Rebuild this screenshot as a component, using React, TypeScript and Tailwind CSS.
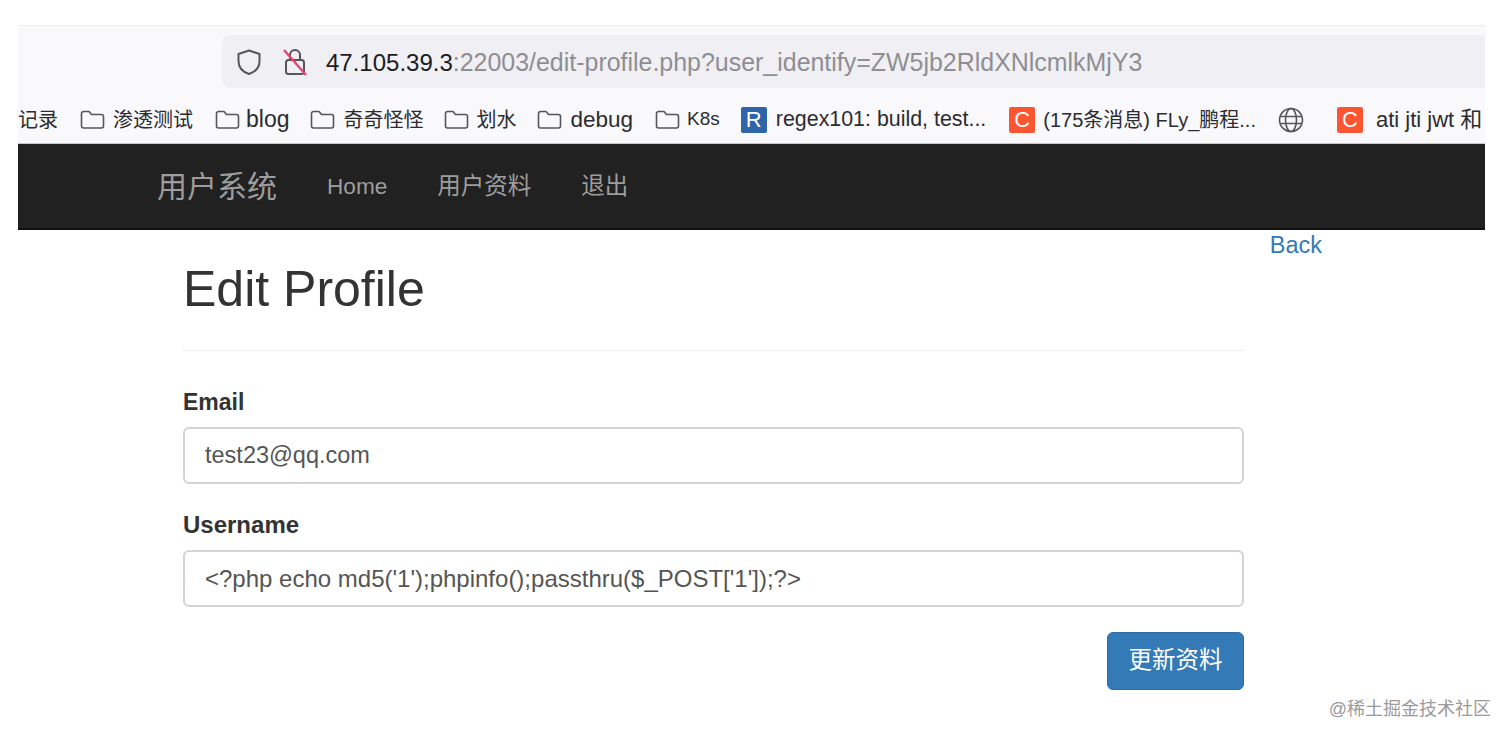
import React from 'react';

const cjk = '"Liberation Sans", "Noto Sans CJK SC", sans-serif';

function FolderIcon() {
  return (
    <svg width="25" height="21" viewBox="0 0 25 21" fill="none" stroke="#55565c" strokeWidth="1.6" className="shrink-0">
      <path d="M1.5 4.5a2 2 0 0 1 2-2h5.5l2.5 3h10a2 2 0 0 1 2 2v9.5a2 2 0 0 1-2 2h-18a2 2 0 0 1-2-2z" strokeLinejoin="round" />
    </svg>
  );
}

function Bookmark({ label, className }: { label: string; className: string }) {
  return (
    <div className={`flex items-center shrink-0 ${className}`}>
      <FolderIcon />
      <span>{label}</span>
    </div>
  );
}

function SiteIcon({ letter, className }: { letter: string; className: string }) {
  return (
    <div className={`w-[26px] h-[26px] rounded-[2px] flex items-center justify-center text-white text-[22px] leading-none shrink-0 ${className}`}>
      {letter}
    </div>
  );
}

function Field({ label, value, labelClass, textClass }: { label: string; value: string; labelClass: string; textClass: string }) {
  return (
    <div>
      <label className={`block leading-[30px] font-bold text-[#333] mb-[10px] ${labelClass}`}>{label}</label>
      <div className={`h-[57px] border-2 border-[#d4d4d4] rounded-[6px] px-[20px] flex items-center text-[#555] ${textClass}`}>
        {value}
      </div>
    </div>
  );
}

export default function App() {
  return (
    <div className="relative w-[1512px] h-[741px] overflow-hidden bg-white pt-[25px] pl-[18px] pr-[27px]" style={{ fontFamily: cjk }}>
      {/* browser chrome */}
      <div className="bg-[#f9f9fb] border-t border-[#ececee] border-b border-b-[#c8c8c8] h-[119px] overflow-hidden flex flex-col">
        <div className="ml-[204px] mt-[9px] h-[53px] bg-[#f0f0f4] rounded-l-[8px] flex items-center pl-[14px]">
          <svg width="26" height="28" viewBox="0 0 26 28" fill="none" stroke="#55565c" strokeWidth="2" className="shrink-0">
            <path d="M13 2.5 L23.5 6 V13 C23.5 19.5 19 24 13 26 C7 24 2.5 19.5 2.5 13 V6 Z" strokeLinejoin="round" />
          </svg>
          <svg width="26" height="30" viewBox="0 0 26 30" fill="none" className="shrink-0 ml-[20px]">
            <path d="M8 12V8a5 5 0 0 1 10 0v4" stroke="#55565c" strokeWidth="2" />
            <rect x="4" y="13" width="18" height="14" rx="2.5" stroke="#55565c" strokeWidth="2" />
            <path d="M2 3 L24 28" stroke="#e5456e" strokeWidth="2.4" />
          </svg>
          <div className="ml-[18px] pt-[1px] text-[24.95px] leading-none whitespace-nowrap text-[#8e8e93]">
            <span className="text-[#1c1c20] text-[24px]">47.105.39.3</span>:22003/edit-profile.php?user_identify=ZW5jb2RldXNlcmlkMjY3
          </div>
        </div>
        <div className="mt-[10px] flex-1 flex items-center overflow-hidden whitespace-nowrap text-[20px] text-[#2b2b30] pb-[2px]">
          <span className="mr-[22px] shrink-0">记录</span>
          <Bookmark label="渗透测试" className="mr-[22px] gap-[8px]" />
          <Bookmark label="blog" className="mr-[21px] gap-[6px] text-[23px]" />
          <Bookmark label="奇奇怪怪" className="mr-[21px] gap-[8px]" />
          <Bookmark label="划水" className="mr-[21px] gap-[7px]" />
          <Bookmark label="debug" className="mr-[22px] gap-[8px] text-[22.5px]" />
          <Bookmark label="K8s" className="mr-[21px] gap-[7px] text-[19px]" />
          <SiteIcon letter="R" className="bg-[#2e64a8] mr-[9px]" />
          <span className="mr-[23px] shrink-0 text-[21.4px]">regex101: build, test...</span>
          <SiteIcon letter="C" className="bg-[#fc5531] mr-[8px]" />
          <span className="mr-[22px] shrink-0">(175条消息) FLy_鹏程...</span>
          <svg width="26" height="26" viewBox="0 0 26 26" fill="none" stroke="#55565c" strokeWidth="1.6" className="shrink-0 mr-[33px]">
            <circle cx="13" cy="13" r="11.5" />
            <ellipse cx="13" cy="13" rx="5.5" ry="11.5" />
            <path d="M2 9.5h22M2 16.5h22" />
          </svg>
          <SiteIcon letter="C" className="bg-[#fc5531] mr-[13px]" />
          <span className="shrink-0 text-[22px]">ati jti jwt 和</span>
        </div>
      </div>

      {/* navbar */}
      <nav className="h-[86px] bg-[#212121] border-b-2 border-[#111] flex items-center pl-[139px] pt-[1px] text-[#9d9d9d] whitespace-nowrap">
        <span className="text-[30px] mr-[50px]">用户系统</span>
        <span className="text-[22.6px] mr-[50px]">Home</span>
        <span className="text-[23.5px] mr-[50px]">用户资料</span>
        <span className="text-[23.5px]">退出</span>
      </nav>

      {/* page */}
      <div className="flex justify-end pr-[163px] h-[31px]">
        <a className="text-[23.5px] leading-[31px] text-[#337ab7]">Back</a>
      </div>
      <div className="ml-[165px] w-[1061px]">
        <h1 className="text-[50px] leading-[56px] text-[#333] pb-[33px] mb-[36px] border-b border-[#eee]">Edit Profile</h1>
        <div className="flex flex-col gap-[26px]">
          <Field label="Email" value="test23@qq.com" labelClass="text-[23px]" textClass="text-[23.5px] pt-[1px]" />
          <Field label="Username" value={`<?php echo md5('1');phpinfo();passthru($_POST['1']);?>`} labelClass="text-[24px]" textClass="text-[24px]" />
        </div>
        <div className="flex justify-end mt-[25px]">
          <button className="w-[137px] h-[58px] rounded-[6px] bg-[#337ab7] border border-[#2e6da4] text-white text-[23.5px]">更新资料</button>
        </div>
      </div>

      <div className="absolute right-[21px] top-[697px] text-[18px] leading-[24px] text-[#9a9a9a]">@稀土掘金技术社区</div>
    </div>
  );
}
